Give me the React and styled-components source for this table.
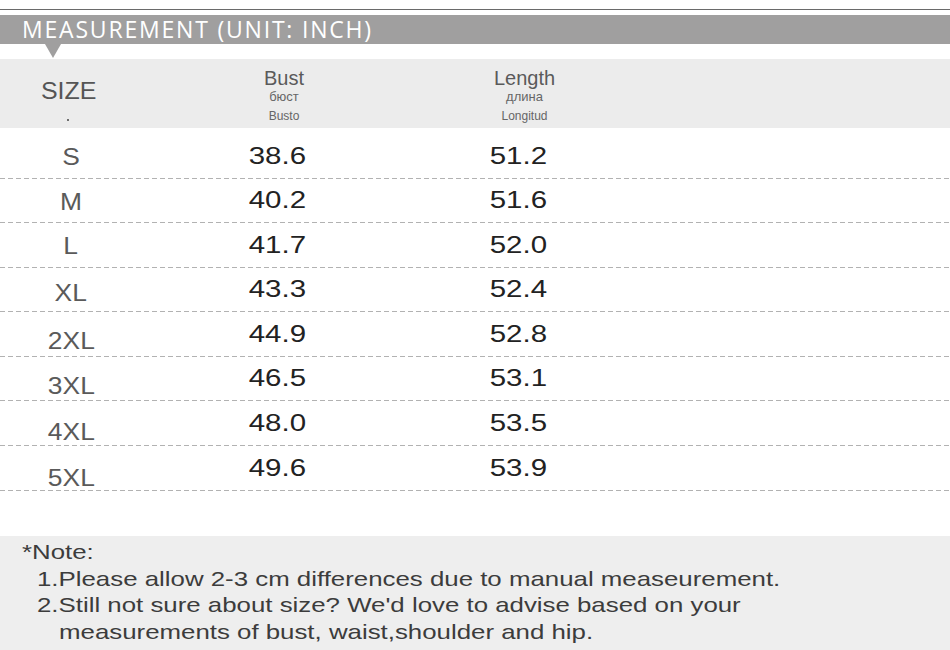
import React from "react"
import styled, { createGlobalStyle } from "styled-components"

const GlobalStyle = createGlobalStyle`
  html, body {
    margin: 0;
    padding: 0;
    background: #fff;
  }
  body {
    font-family: "Liberation Sans", Arial, sans-serif;
  }
`

const sizes = [
  { size: "S", bust: "38.6", length: "51.2", shift: 0, h: 45 },
  { size: "M", bust: "40.2", length: "51.6", shift: 1, h: 44 },
  { size: "L", bust: "41.7", length: "52.0", shift: 0, h: 45 },
  { size: "XL", bust: "43.3", length: "52.4", shift: 3, h: 44 },
  { size: "2XL", bust: "44.9", length: "52.8", shift: 6, h: 45 },
  { size: "3XL", bust: "46.5", length: "53.1", shift: 7, h: 44 },
  { size: "4XL", bust: "48.0", length: "53.5", shift: 8.5, h: 45 },
  { size: "5XL", bust: "49.6", length: "53.9", shift: 9, h: 45 },
]

const Page = styled.div`
  width: 950px;
  height: 650px;
  display: flex;
  flex-direction: column;
  overflow: hidden;
  background: #fff;
`

const Rule = styled.div`
  margin-top: 9px;
  height: 1px;
  background: #6a6a6a;
`

const Banner = styled.div`
  position: relative;
  margin-top: 5px;
  height: 29px;
  background: #a09f9f;
  padding-left: 22px;

  &::after {
    content: "";
    position: absolute;
    left: 45px;
    top: 100%;
    border-left: 8.5px solid transparent;
    border-right: 8.5px solid transparent;
    border-top: 14px solid #a09f9f;
  }
`

const BannerTitle = styled.h1`
  margin: 0;
  font-family: "Open Sans", sans-serif;
  font-weight: 400;
  font-size: 23px;
  line-height: 29px;
  letter-spacing: 1.8px;
  color: #fff;
  white-space: nowrap;
`

const Grid = styled.div`
  display: grid;
  grid-template-columns: 142px 284px 197px 1fr;
`

const HeadRow = styled(Grid)`
  margin-top: 15px;
  height: 69px;
  background: #ececec;
`

const HeadCell = styled.div`
  display: flex;
  flex-direction: column;
  align-items: center;
  padding-top: ${(p) => p.$top}px;
`

const SizeHead = styled.span`
  margin-right: 4px;
  font-size: 24px;
  line-height: 24px;
  color: #555;
  transform: scaleX(1.04);
`

const Dot = styled.span`
  width: 2px;
  height: 2px;
  margin-top: 16px;
  margin-right: 6px;
  background: #444;
  border-radius: 50%;
`

const ColTitle = styled.span`
  font-size: 20px;
  line-height: 20px;
  color: #5a5a5a;
`

const ColRu = styled.span`
  font-size: 13px;
  line-height: 18px;
  color: #666;
`

const ColEs = styled.span`
  font-size: 12px;
  line-height: 20px;
  color: #666;
`

const Rows = styled.div`
  padding-top: 6px;
`

const Row = styled(Grid)`
  height: ${(p) => p.$h}px;
  align-items: center;
  background: repeating-linear-gradient(90deg, #b2b2b2 0 5px, transparent 5px 8px)
    left bottom / 100% 1px no-repeat;
`

const SizeLabel = styled.span`
  justify-self: center;
  margin-top: ${(p) => p.$shift * 2}px;
  font-size: 24px;
  line-height: 28px;
  color: #5a5a5a;
  transform: scaleX(1.1);
`

const Value = styled.span`
  justify-self: center;
  margin-right: 13px;
  margin-top: -2px;
  font-size: 23px;
  line-height: 28px;
  color: #222;
  transform: scaleX(1.28);
`

const Notes = styled.div`
  flex: 1;
  margin-top: 45px;
  padding: 3px 0 0 22px;
  background: #eeeeee;
`

const NoteLine = styled.div`
  margin-left: ${(p) => p.$indent || 0}px;
  font-size: 21px;
  line-height: 26.5px;
  color: #3c3c3c;
  white-space: nowrap;
  transform: scaleX(1.23);
  transform-origin: left center;
`

const App = () => {
  return (
    <>
      <GlobalStyle />
      <Page>
        <Rule />
        <Banner>
          <BannerTitle>MEASUREMENT (UNIT: INCH)</BannerTitle>
        </Banner>
        <HeadRow>
          <HeadCell $top={20}>
            <SizeHead>SIZE</SizeHead>
            <Dot />
          </HeadCell>
          <HeadCell $top={9}>
            <ColTitle>Bust</ColTitle>
            <ColRu>бюст</ColRu>
            <ColEs>Busto</ColEs>
          </HeadCell>
          <HeadCell $top={9}>
            <ColTitle>Length</ColTitle>
            <ColRu>длина</ColRu>
            <ColEs>Longitud</ColEs>
          </HeadCell>
          <div />
        </HeadRow>
        <Rows>
          {sizes.map((r) => (
            <Row key={r.size} $h={r.h}>
              <SizeLabel $shift={r.shift}>{r.size}</SizeLabel>
              <Value>{r.bust}</Value>
              <Value>{r.length}</Value>
              <div />
            </Row>
          ))}
        </Rows>
        <Notes>
          <NoteLine>*Note:</NoteLine>
          <NoteLine $indent={15}>
            1.Please allow 2-3 cm differences due to manual measeurement.
          </NoteLine>
          <NoteLine $indent={15}>
            2.Still not sure about size? We'd love to advise based on your
          </NoteLine>
          <NoteLine $indent={37}>
            measurements of bust, waist,shoulder and hip.
          </NoteLine>
        </Notes>
      </Page>
    </>
  )
}

export default App
